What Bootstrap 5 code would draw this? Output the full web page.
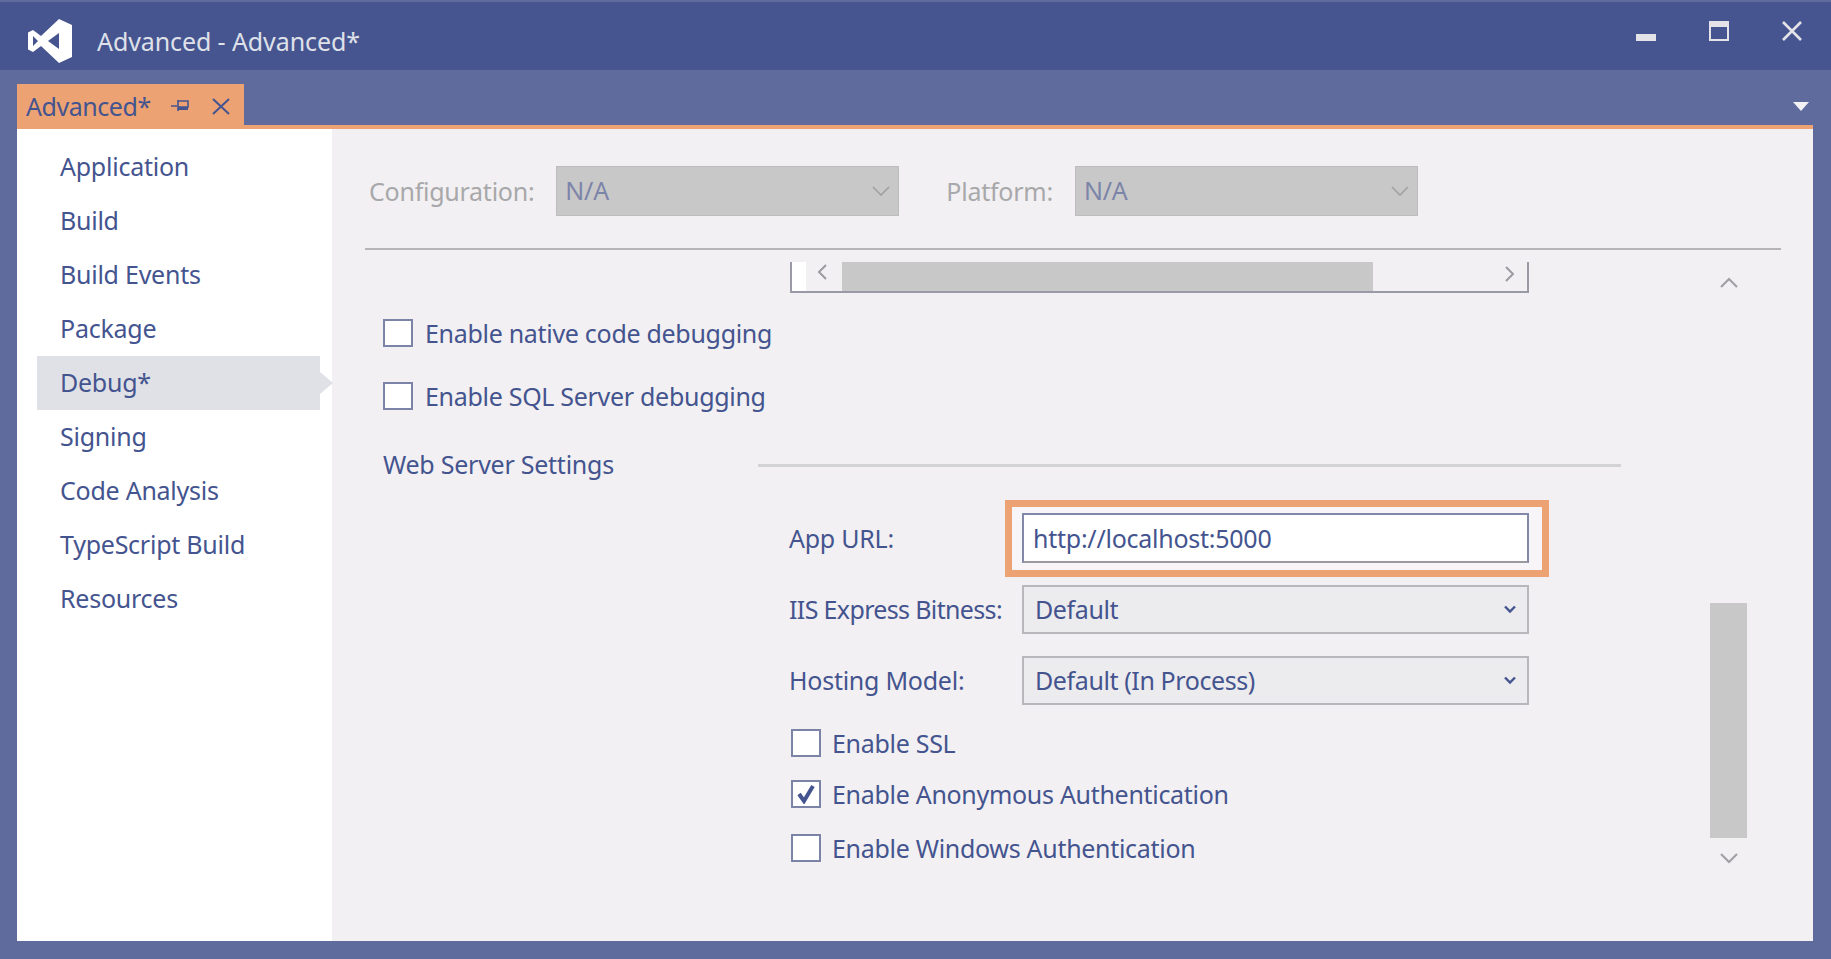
<!DOCTYPE html>
<html lang="en">

<head>
  <meta charset="UTF-8">
  <title>Advanced - Advanced*</title>
  <link href="https://cdn.jsdelivr.net/npm/bootstrap@5.3.3/dist/css/bootstrap.min.css" rel="stylesheet">
  <style>
    html, body { height: 100%; }

    body {
      background: #5e6b9c;
      font-family: "Noto Sans", "Liberation Sans", sans-serif;
      font-size: 25px;
      letter-spacing: -0.25px;
      color: #44548f;
      overflow: hidden;
    }

    .vs-title { height: 68px; margin-top: 2px; background: #46558f; color: #dfe1ea; padding: 17px 0 0 28px; }
    .vs-title-text { margin: 4px 0 0 25px; letter-spacing: -0.1px; }
    .win-btns { gap: 53px; margin: 2px 29px 0 0; }
    .win-btns svg { display: block; }

    .tab-strip { height: 59px; padding: 14px 4px 0 0; border-bottom: 4px solid #eda274; margin-left: 17px; margin-right: 18px; }
    .doc-tab { width: 227px; height: 41px; background: #eda274; padding: 3px 0 0 9px; line-height: 38px; letter-spacing: -0.45px; }
    .doc-tab svg:first-of-type { margin-left: 20px; }
    .doc-tab svg:last-of-type { margin-left: 23px; }

    .prop-window { height: 812px; margin: 0 18px 0 17px; }

    .side-menu { width: 315px; background: #fff; padding: 11px 12px 0 20px; }
    .side-menu .nav-link { height: 54px; padding: 0 0 0 23px; line-height: 52px; color: #44548f; position: relative; }
    .side-menu .nav-link.active { background: #e0e1e6; }
    .side-menu .nav-link.active::after {
      content: "";
      position: absolute;
      left: 100%;
      top: 16px;
      border-left: 13px solid #e0e1e6;
      border-top: 11px solid transparent;
      border-bottom: 11px solid transparent;
    }

    .prop-panel { background: #f2f0f2; min-width: 0; }
    .cfg-row { padding: 37px 0 0 37px; height: 119px; }
    .cfg-label { color: #a8a8aa; margin-right: 22px; line-height: 50px; }
    .cfg-label-2 { margin-left: 47px; }
    .cfg-select.form-select {
      width: 343px;
      height: 50px;
      padding: 0 8px;
      border: 1px solid #bdbdbd;
      border-radius: 0;
      font-size: 25px;
      letter-spacing: -0.25px;
      color: #7c84a8;
      opacity: 1;
      background-color: #c8c8c8;
      background-size: 18px 10px;
      background-position: right 8px center;
      background-image: url("data:image/svg+xml,%3csvg xmlns='http://www.w3.org/2000/svg' viewBox='0 0 18 10'%3e%3cpath fill='none' stroke='%23a0a0a0' stroke-width='1.6' d='M1 1l8 8 8-8'/%3e%3c/svg%3e");
    }
    .cfg-rule { height: 2px; margin: 0 32px 0 33px; background: #b5b5b5; flex: none; }

    .form-scroll { padding-left: 51px; }
    .hscroll-track {
      width: 739px;
      height: 31px;
      margin: 12px 0 0 407px;
      border: 2px solid #9a9aa6;
      border-top: 0;
      background: #f2f0f2;
    }
    .hscroll-end { width: 50px; padding-top: 2px; }
    .hscroll-end-l { background: linear-gradient(to right, #fff 14px, #f2f0f2 14px); padding-right: 15px; }
    .hscroll-end-r { padding-right: 12px; }
    .hscroll-thumb { width: 531px; background: #c8c8c8; }

    .vs-check { margin: 0; padding: 0; min-height: 0; }
    .vs-check .form-check-input {
      width: 30px;
      height: 28px;
      margin: 0 12px 0 0;
      float: none;
      flex: none;
      border: 2px solid #7b83a6;
      border-radius: 0;
      background-color: #fff;
      opacity: 1;
    }
    .vs-check .form-check-input:checked {
      background-color: #fff;
      border-color: #7b83a6;
      background-size: 22px 20px;
      background-image: url("data:image/svg+xml,%3csvg xmlns='http://www.w3.org/2000/svg' viewBox='0 0 22 20'%3e%3cpath fill='none' stroke='%2344548f' stroke-width='4' d='M4 10l5 7L18 2'/%3e%3c/svg%3e");
    }
    .vs-check .form-check-label { line-height: 26px; letter-spacing: -0.3px; opacity: 1; }
    .top-check-1 { margin-top: 26px; }
    .top-check-2 { margin-top: 35px; }

    .section-head { height: 30px; margin-top: 40px; }
    .section-rule { height: 3px; width: 863px; margin-left: 144px; background: #d3d3d5; flex: none; }

    .web-form { margin: 20px 0 0 406px; }
    .field-label { width: 216px; flex: none; white-space: nowrap; }
    .field-label-tight { letter-spacing: -0.65px; }
    .url-frame { width: 544px; height: 77px; border: 7px solid #eda274; padding: 6px 13px 7px 10px; flex: none; background: #f7f5f7; }
    .url-input.form-control {
      height: 50px;
      padding: 0 9px;
      border: 2px solid #8289a8;
      border-bottom-color: #9a9aa2;
      border-radius: 0;
      font-size: 25px;
      color: #44548f;
      letter-spacing: -0.25px;
      background: #fff;
    }
    .host-select.form-select {
      width: 507px;
      height: 49px;
      margin-left: 17px;
      padding: 0 11px;
      border: 2px solid #b8b8bc;
      border-radius: 0;
      font-size: 25px;
      letter-spacing: -0.4px;
      color: #44548f;
      background-color: #ecebee;
      background-size: 12px 9px;
      background-position: right 11px center;
      background-image: url("data:image/svg+xml,%3csvg xmlns='http://www.w3.org/2000/svg' viewBox='0 0 12 9'%3e%3cpath fill='none' stroke='%2344548f' stroke-width='2.4' d='M1 1.5l5 5 5-5'/%3e%3c/svg%3e");
    }
    .host-row-1 { margin-top: 8px; }
    .host-row-2 { margin-top: 22px; }
    .host-check { padding-left: 2px; }
    .host-check .form-check-input { margin-right: 11px; }
    .host-check-1 { margin-top: 24px; }
    .host-check-2 { margin-top: 23px; }
    .host-check-3 { margin-top: 26px; }

    .vscroll-col { width: 37px; margin-right: 66px; flex: none; padding-top: 27px; }
    .vscroll-thumb { width: 37px; height: 235px; margin-top: 315px; margin-bottom: 15px; background: #c8c8c8; }
  </style>
</head>

<body>

  <div class="vs-title d-flex align-items-start">
    <svg width="44" height="44" viewBox="0 0 44 44">
      <path fill="#fff" fill-rule="evenodd" d="M31 0L44 6V38L31 44L13 27L5 33L0 30.5V13.5L5 11L13 17ZM31 14L20 22L31 30ZM5 17V27L10 22Z"/>
    </svg>
    <span class="vs-title-text">Advanced - Advanced*</span>
    <div class="win-btns d-flex align-items-start ms-auto">
      <svg width="20" height="20" viewBox="0 0 20 20"><rect y="13" width="20" height="7" fill="#e4e4e8"/></svg>
      <svg width="20" height="20" viewBox="0 0 20 20"><path fill="#e4e4e8" fill-rule="evenodd" d="M0 0H20V20H0ZM2 6V18H18V6Z"/></svg>
      <svg width="20" height="20" viewBox="0 0 20 20"><path stroke="#e4e4e8" stroke-width="2.6" d="M1 1L19 19M19 1L1 19"/></svg>
    </div>
  </div>

  <div class="tab-strip d-flex align-items-start justify-content-between">
    <div class="doc-tab d-flex align-items-center">
      <span>Advanced*</span>
      <svg width="18" height="14" viewBox="0 0 18 14"><path fill="none" stroke="#44548f" stroke-width="1.6" d="M0 7H6M7 2H17V8H7ZM7 1V12"/><rect x="7" y="8" width="10" height="3" fill="#44548f"/></svg>
      <svg width="18" height="17" viewBox="0 0 18 17"><path stroke="#44548f" stroke-width="2" d="M1 1L17 16M17 1L1 16"/></svg>
    </div>
    <svg class="mt-3" width="16" height="11" viewBox="0 0 16 11"><path fill="#f2f2f4" d="M0 2H16L8 11Z"/></svg>
  </div>

  <div class="prop-window d-flex">
    <nav class="side-menu nav flex-column flex-nowrap">
      <a class="nav-link" href="#">Application</a>
      <a class="nav-link" href="#">Build</a>
      <a class="nav-link" href="#">Build Events</a>
      <a class="nav-link" href="#">Package</a>
      <a class="nav-link active" href="#">Debug*</a>
      <a class="nav-link" href="#">Signing</a>
      <a class="nav-link" href="#">Code Analysis</a>
      <a class="nav-link" href="#">TypeScript Build</a>
      <a class="nav-link" href="#">Resources</a>
    </nav>

    <div class="prop-panel flex-grow-1 d-flex flex-column">
      <div class="cfg-row d-flex align-items-start">
        <label class="cfg-label">Configuration:</label>
        <select class="cfg-select form-select" disabled><option>N/A</option></select>
        <label class="cfg-label cfg-label-2">Platform:</label>
        <select class="cfg-select form-select" disabled><option>N/A</option></select>
      </div>
      <div class="cfg-rule"></div>

      <div class="d-flex flex-grow-1">
        <div class="form-scroll flex-grow-1">
          <div class="hscroll-track d-flex">
            <div class="hscroll-end hscroll-end-l d-flex align-items-start justify-content-end">
              <svg width="10" height="16" viewBox="0 0 10 16"><path fill="none" stroke="#9a9aa0" stroke-width="2" d="M9 1L2 8L9 15"/></svg>
            </div>
            <div class="hscroll-thumb"></div>
            <div class="hscroll-end-r flex-grow-1 d-flex align-items-start justify-content-end pt-1">
              <svg width="10" height="16" viewBox="0 0 10 16"><path fill="none" stroke="#9a9aa0" stroke-width="2" d="M1 1L8 8L1 15"/></svg>
            </div>
          </div>

          <div class="vs-check form-check d-flex align-items-center top-check-1">
            <input class="form-check-input" type="checkbox" id="chkNative">
            <label class="form-check-label" for="chkNative">Enable native code debugging</label>
          </div>
          <div class="vs-check form-check d-flex align-items-center top-check-2">
            <input class="form-check-input" type="checkbox" id="chkSql">
            <label class="form-check-label" for="chkSql">Enable SQL Server debugging</label>
          </div>

          <div class="section-head d-flex align-items-center">
            <span>Web Server Settings</span>
            <div class="section-rule"></div>
          </div>

          <div class="web-form">
            <div class="d-flex align-items-center">
              <label class="field-label">App URL:</label>
              <div class="url-frame">
                <input class="url-input form-control" type="text" value="http://localhost:5000">
              </div>
            </div>
            <div class="d-flex align-items-center host-row-1">
              <label class="field-label field-label-tight">IIS Express Bitness:</label>
              <select class="host-select form-select"><option>Default</option></select>
            </div>
            <div class="d-flex align-items-center host-row-2">
              <label class="field-label">Hosting Model:</label>
              <select class="host-select form-select"><option>Default (In Process)</option></select>
            </div>
            <div class="vs-check form-check d-flex align-items-center host-check host-check-1">
              <input class="form-check-input" type="checkbox" id="chkSsl">
              <label class="form-check-label" for="chkSsl">Enable SSL</label>
            </div>
            <div class="vs-check form-check d-flex align-items-center host-check host-check-2">
              <input class="form-check-input" type="checkbox" id="chkAnon" checked>
              <label class="form-check-label" for="chkAnon">Enable Anonymous Authentication</label>
            </div>
            <div class="vs-check form-check d-flex align-items-center host-check host-check-3">
              <input class="form-check-input" type="checkbox" id="chkWin">
              <label class="form-check-label" for="chkWin">Enable Windows Authentication</label>
            </div>
          </div>
        </div>

        <div class="vscroll-col d-flex flex-column align-items-center">
          <svg width="18" height="11" viewBox="0 0 18 11"><path fill="none" stroke="#a0a0a6" stroke-width="2.2" d="M1 10L9 2L17 10"/></svg>
          <div class="vscroll-thumb"></div>
          <svg width="18" height="11" viewBox="0 0 18 11"><path fill="none" stroke="#a0a0a6" stroke-width="2.2" d="M1 1L9 9L17 1"/></svg>
        </div>
      </div>
    </div>
  </div>

  <script src="https://cdn.jsdelivr.net/npm/bootstrap@5.3.3/dist/js/bootstrap.bundle.min.js"></script>
</body>

</html>
